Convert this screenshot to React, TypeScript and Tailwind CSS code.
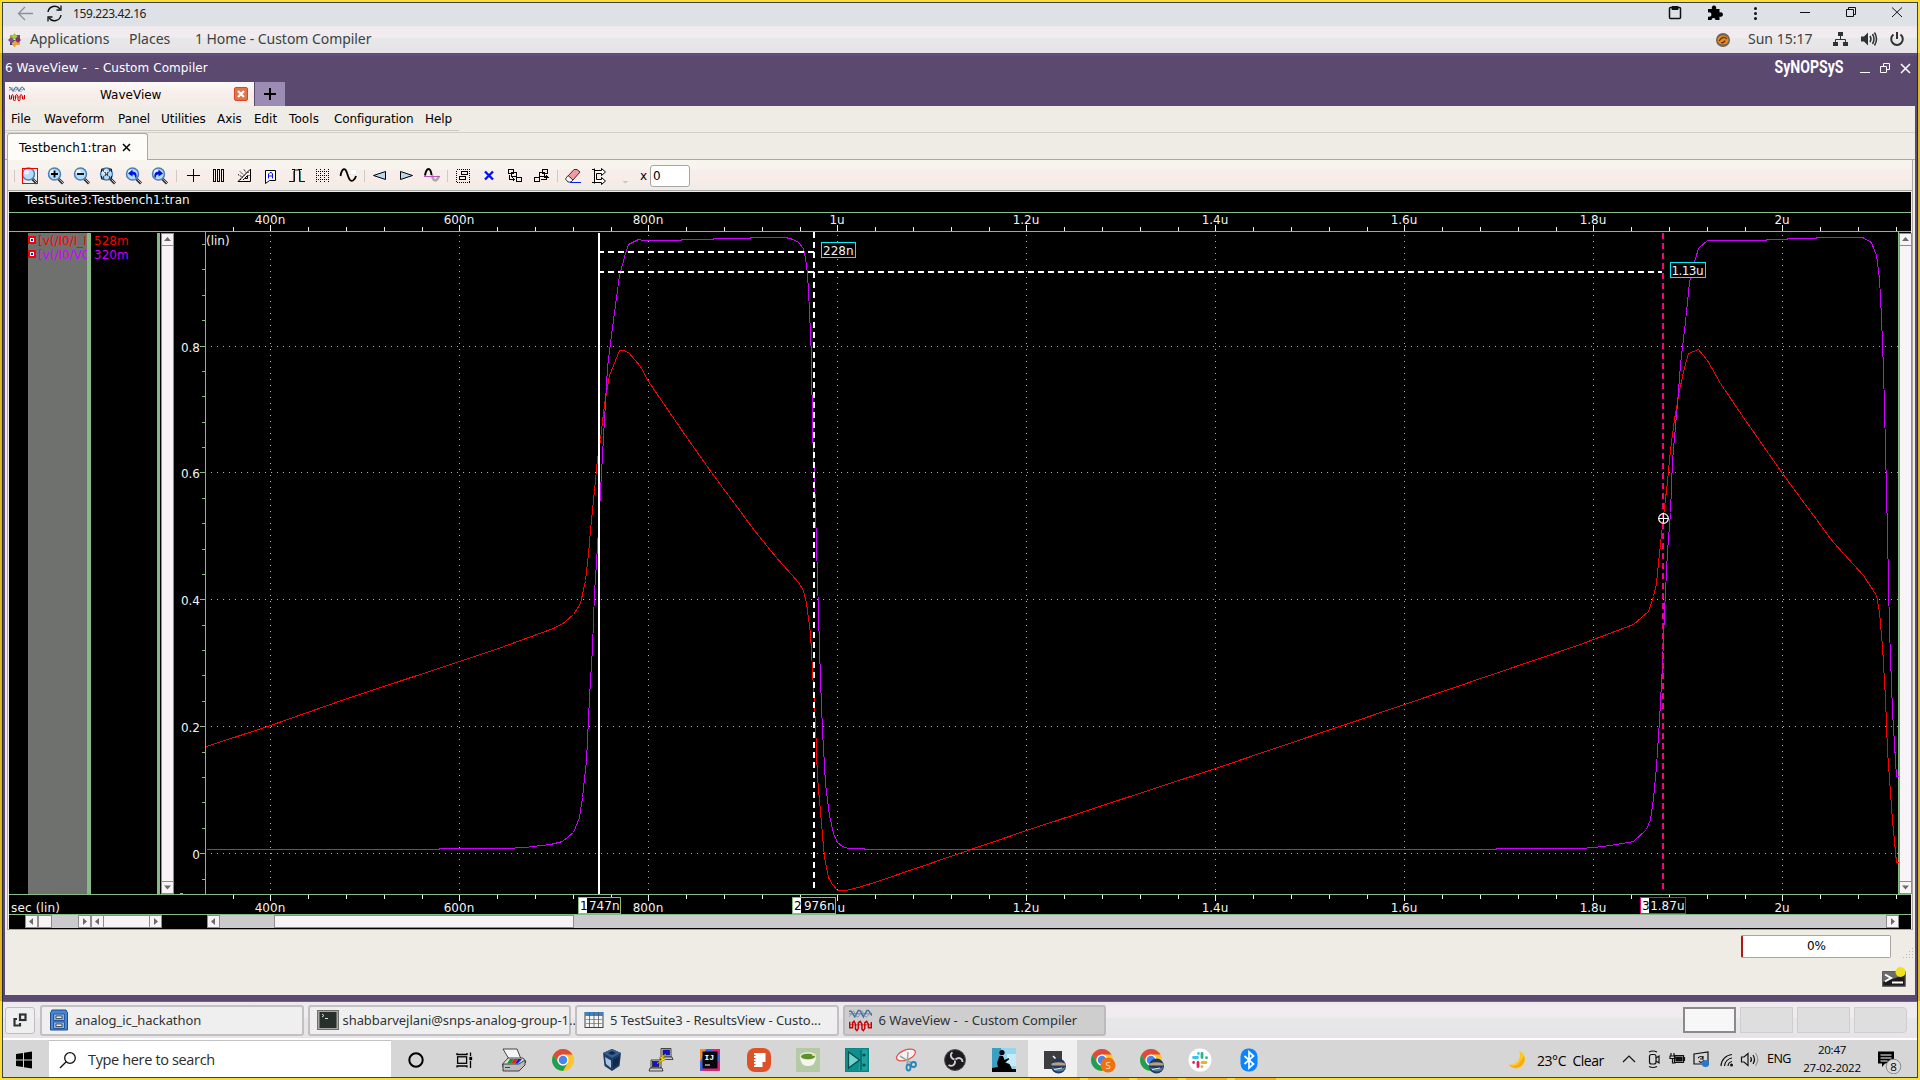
import React from "react";

const RED =
  "206,746 270,725 344,699 459,661 498,648 553,628 564,622 573,614 580,603 585,580 588,553 590,530 597,459 600,439 604,404 609,375 615,360 619,350 623,350 628,352 640,366 648,381 687,438 711,472 754,530 775,556 798,582 803,590 806,603 810,633 812,670 815,724 817,777 821,823 824,857 828,877 832,884 837,890 845,890 858,887 880,880 1026,830 1215,768 1404,704 1580,644 1593,639 1617,630 1633,624 1648,611 1653,596 1656,583 1659,553 1663,516 1667,481 1670,449 1674,419 1679,390 1684,367 1688,353 1693,351 1698,349 1707,360 1720,383 1743,417 1782,473 1807,507 1833,542 1863,575 1876,595 1879,612 1882,646 1885,698 1887,750 1892,820 1896,862 1898,862";
const PURPLE =
  "206,849 438,849 440,848 505,848 525,847 541,845 550,844 562,841 573,832 579,817 582,797 586,760 589,697 592,647 594,593 598,530 600,491 603,437 607,367 612,327 619,275 625,253 628,244 638,239 643,240 680,240 682,239 712,239 714,238 749,238 751,237 785,237 793,239 798,242 803,248 805,258 807,273 809,310 811,357 812,430 814,477 816,543 818,613 820,680 822,730 825,783 829,815 833,833 837,842 842,846 848,848 863,848 865,849 1495,849 1497,848 1580,848 1593,847 1610,845 1633,841 1646,829 1650,819 1653,798 1656,766 1659,720 1662,664 1664,612 1667,551 1670,512 1672,460 1677,403 1680,364 1685,321 1689,282 1693,265 1698,248 1707,240 1765,240 1767,239 1786,239 1788,238 1815,238 1817,237 1862,237 1871,242 1876,255 1879,278 1881,317 1883,369 1885,447 1887,534 1889,629 1892,711 1896,776 1898,776";

const MAJORS = [
  [270, "400n"], [459, "600n"], [648, "800n"], [837, "1u"], [1026, "1.2u"],
  [1215, "1.4u"], [1404, "1.6u"], [1593, "1.8u"], [1782, "2u"],
] as [number, string][];
const MINORS = Array.from({ length: 45 }, (_, i) => Math.round(232.6 + i * 37.8)).filter((v) => v < 1898);
const LEVELS = [[346, "0.8"], [472, "0.6"], [599, "0.4"], [726, "0.2"], [853, "0"]] as [number, string][];
const YMINORS = Array.from({ length: 26 }, (_, i) => Math.round(244 + i * 25.38));
const DJV = "DejaVu Sans, sans-serif";

function Ruler({ top }: { top?: boolean }) {
  const y0 = top ? 213 : 895;
  return (
    <svg width="1904" height="18" viewBox={`9 ${y0} 1904 18`} className="block shrink-0 overflow-visible" fontFamily={DJV} fontSize="12" fill="#f2f2f2">
      {MINORS.map((x) => <rect key={x} x={x} y={top ? 227 : 895} width="1" height="4" />)}
      {MAJORS.map(([x, t]) => (
        <g key={t}>
          <rect x={x} y={top ? 225 : 895} width="1" height="6" />
          {/* the second cursor's readout covers the leading digit of this label */}
          {!top && t === "1u"
            ? <text x="837.500" y="912">u</text>
            : <text x={x} y={top ? 224 : 912} textAnchor="middle">{t}</text>}
        </g>
      ))}
      {!top && (
        <g>
          <text x="11" y="912" textLength="49">sec (lin)</text>
          {[[578, 43, "1", "747n", "#86bb88"], [792, 44, "2", "976n", "#86bb88"], [1640, 46, "3", "1.87u", "#f4047c"]].map(([x, w, n, t, c]) => (
            <g key={n as string}>
              <rect x={(x as number) + 0.5} y="897.5" width={(w as number) - 1} height="16" fill="#000" stroke={c as string} />
              <rect x={(x as number) + 1} y="898" width="8" height="15" fill="#fff" />
              <text x={(x as number) + 2} y="910" fill="#000" textLength="7">{n}</text>
              <text x={(x as number) + (w as number) - 1.5} y="910" textAnchor="end">{t}</text>
            </g>
          ))}
        </g>
      )}
    </svg>
  );
}

function Plot() {
  return (
    <svg width="1724" height="662" viewBox="175 232 1724 662" className="block shrink-0" fontFamily={DJV} fontSize="12" fill="#f2f2f2">
      <g shapeRendering="crispEdges" fill="none">
        {MAJORS.map(([x]) => <path key={x} d={`M${x + 0.5} 235V894`} stroke="#b0b0b0" strokeDasharray="1 5" />)}
        {LEVELS.map(([y]) => <path key={y} d={`M205 ${y + 0.5}H1898`} stroke="#b0b0b0" strokeDasharray="1 5" />)}
        <path d="M205.5 232V894M1898.5 232V894" stroke="#86bb88" />
        {YMINORS.map((y) => <path key={y} d={`M202 ${y + 0.5}H205`} stroke="#86bb88" />)}
        {LEVELS.map(([y]) => <path key={y} d={`M200 ${y + 0.5}H205`} stroke="#86bb88" />)}
        <path d="M180 893.5h3" stroke="#86bb88" />
        <polyline points={RED} stroke="#fa0000" transform="translate(.5 .5)" />
        <polyline points={PURPLE} stroke="#cc00ff" transform="translate(.5 .5)" />
        <path d="M599 233V894" stroke="#fff" strokeWidth="2" />
        <path d="M814 232V888" stroke="#fff" strokeWidth="2" strokeDasharray="6 4" />
        <path d="M598 252H814M598 272H1662" stroke="#fff" strokeWidth="2" strokeDasharray="6 4" />
        <path d="M1663 233V890" stroke="#f4047c" strokeWidth="2" strokeDasharray="6 4" />
        <path d="M1658 518.5h11M1663.5 513v11" stroke="#fff" />
      </g>
      <circle cx="1663.5" cy="518.5" r="4.8" fill="none" stroke="#fff" strokeWidth="1.200" />
      <rect x="821.5" y="242.500" width="34" height="15" fill="#000" stroke="#00f0f8" />
      <text x="823" y="254.500">228n</text>
      <rect x="1670.5" y="262.500" width="35" height="15" fill="#000" stroke="#00f0f8" />
      <text x="1671.500" y="274.500" textLength="32">1.13u</text>
      <text x="206" y="244.500">(lin)</text>
      {LEVELS.map(([y, t]) => <text key={t} x="200" y={y + 5.5} textAnchor="end">{t}</text>)}
    </svg>
  );
}

function Arrow({ d }: { d: "u" | "d" | "l" | "r" }) {
  const p = { u: "M6.500 4l3.500 4H3z", d: "M3 4.500h7l-3.500 4z", l: "M4 6.500L8 3v7z", r: "M9 6.500L5 3v7z" }[d];
  return (
    <svg width="13" height="13" viewBox="0 0 13 13" className="block shrink-0">
      <rect x=".5" y=".5" width="12" height="12" fill="#f7f3f7" stroke="#8f8d90" />
      <path d={p} fill="#6b6b6b" />
    </svg>
  );
}

function VScroll() {
  return (
    <div className="mt-[1px] flex h-[661px] w-[13px] shrink-0 flex-col border-x border-[#8f8d90] bg-[#f7f3f7]">
      <div className="-mx-px"><Arrow d="u" /></div>
      <div className="flex-1" />
      <div className="-mx-px"><Arrow d="d" /></div>
    </div>
  );
}

function Tool({ children }: { children?: React.ReactNode }) {
  return (
    <svg width="26" height="26" viewBox="0 0 26 26" className="block shrink-0" fill="none" stroke="#000" strokeWidth="1">
      {children}
    </svg>
  );
}
function Sep({ w }: { w: string }) {
  return <div className={`${w} flex shrink-0 justify-center`}><div className="h-[12px] w-[1px] bg-[#cfc9c4]" /></div>;
}
function Zoom({ children, boxed }: { children?: React.ReactNode; boxed?: boolean }) {
  return (
    <Tool>
      <path d="M15.500 16l4.500 4.500" stroke="#333" strokeWidth="3" />
      <path d="M16.500 16.500l3.500 3.500" stroke="#bbb" strokeWidth="1" />
      <circle cx="11.500" cy="11" r="6" fill="#b3dbfb" stroke="#4a80b4" strokeWidth="1.500" />
      <circle cx="9.500" cy="9" r="2.500" fill="#e4f3ff" stroke="none" />
      {children}
      {boxed && <rect x="5.500" y="5.500" width="15" height="15" stroke="#f00000" />}
    </Tool>
  );
}

function Wave({ size }: { size: number }) {
  return (
    <svg width={size} height={size} viewBox="0 0 16 16" fill="none" className="block shrink-0">
      <path d="M0 3.300h16" stroke="#6b8199" strokeWidth=".6" />
      <path d="M0 1.500h1.500L4 5.500 6.500 1h1L10 5.500 12.500 1h1L16 4.500" stroke="#47709c" strokeWidth="1" />
      <path d="M0 5.500L2 3l1-1.800L5.500 5.500h1L9 1.200l2.500 4.300h.8L15.500 2" stroke="#6f93b8" strokeWidth=".6" />
      <path d="M0 11h16" stroke="#b33" strokeWidth=".6" />
      <path d="M.5 8.800V13h2V9.500L3.500 8.500l1 2v3.500l1 1 1-1.500V9.500l1.300-1 1.200 2v3.500l1 1 1-1.500V9.500l1.300-1 1.200 2V13h2V9" stroke="#c80000" strokeWidth="1" />
    </svg>
  );
}

function Chrome() {
  return (
    <g>
      <circle cx="12" cy="12" r="11" fill="#fbc52c" />
      <path d="M2.500 6.500A11 11 0 0 1 21.500 6.500H12A5.500 5.500 0 0 0 7 14.500z" fill="#df4a3e" />
      <path d="M2.500 6.500A11 11 0 0 0 12 23l4.800-8.300A5.500 5.500 0 0 1 7.200 14.700z" fill="#1e9e58" />
      <circle cx="12" cy="12" r="5.500" fill="#fff" />
      <circle cx="12" cy="12" r="4.300" fill="#4a84f0" />
    </g>
  );
}
function Badge() {
  return (
    <g>
      <circle cx="17.500" cy="18" r="7.500" fill="#25385e" />
      <path d="M10.500 15.500q7-2.500 14 0v2h-14z" fill="#b3a27f" />
      <path d="M10.500 19q7 3 14 0l-2 3.500q-5 2-9 0z" fill="#547ea3" />
      <path d="M13 21.500l8-1.500" stroke="#dbe8f0" />
    </g>
  );
}

const APPS: React.ReactNode[] = [
  <circle cx="12" cy="12" r="6.700" fill="none" stroke="#000" strokeWidth="2" />,
  <g fill="none" stroke="#000" strokeWidth="1.300"><path d="M4 5V6.500H14V5M4 19.500V18H14v1.500" /><rect x="4.600" y="8.800" width="9" height="6.500" /><path d="M17.500 4.500V8M17.500 13v7" /><rect x="17" y="9.500" width="1.500" height="2" fill="#000" /></g>,
  <g stroke="#333" strokeWidth=".9"><path d="M1 1h14l4 10H7z" fill="#f6f6f6" /><path d="M6 10h15l3 4-6 5H1l-.5-3z" fill="#ddd" /><path d="M1 16h16l6-4v5l-6 6H1z" fill="#bbb" /><path d="M8 11h4l-3 4.500H5z" fill="#0a9a2e" stroke="none" /><path d="M12 11h4l-3 4.500H9z" fill="#e0251f" stroke="none" /><path d="M16 11h4l-4 4.500h-3z" fill="#1627d8" stroke="none" /><path d="M3 19.500h5" /></g>,
  <Chrome />,
  <g><path d="M12 1l9 4-1.500 13L12 23l-7.500-5L3 5z" fill="#1d3c66" /><path d="M12 1l9 4-9 5-9-5z" fill="#33608f" /><path d="M5 9l6 3.500V20l-5-4z" fill="#a9c3df" /><path d="M19.500 8L13 12v8l5.500-4z" fill="#122848" /><path d="M8 5l4-2 4 2-4 2z" fill="#122848" /></g>,
  <g stroke="#222" strokeWidth=".8"><path d="M12 .5h10v8.500H12z" fill="#d5d5d5" /><rect x="14" y="2" width="6.500" height="5" fill="#0a12e0" /><path d="M12 9h11l1 2.500H11z" fill="#ccc" /><path d="M2 12h10v8H2z" fill="#d5d5d5" /><rect x="3.500" y="13.500" width="6.500" height="5" fill="#0a12e0" /><path d="M1 20h12l1 3H0z" fill="#ccc" /><path d="M17 6l-7 4 3 1-5 4.500 8.500-4-3-1.500z" fill="#ffe600" stroke="#a78f00" /></g>,
  <g><rect x="2" y="1" width="20" height="22" rx="1" fill="#d62a78" /><path d="M2 1h12L2 14z" fill="#f38b2c" /><path d="M8 1h14v11L2 23v-9z" fill="#3a65e8" /><path d="M12 1h10v6z" fill="#e0267c" /><rect x="4.500" y="3.500" width="15" height="17" fill="#08080c" /><text x="6.500" y="12" fontSize="8" fontWeight="700" fontFamily="Liberation Mono, monospace" fill="#fff">IJ</text><path d="M7 17h5" stroke="#fff" /></g>,
  <g><rect x="0" y="0" width="24" height="24" rx="8" fill="#dd5228" /><path d="M7 5h11.500v9h-3v5H7z" fill="#fff" /><path d="M5.500 7.500h3M5.500 10.500h3M5.500 13.500h3M5.500 16.500h3" stroke="#dd5228" strokeWidth="1.200" /></g>,
  <g><rect width="24" height="24" fill="#b4caa5" /><path d="M4 8h16q0 10-8 10T4 8z" fill="#f3f5ee" /><ellipse cx="12" cy="8" rx="8.500" ry="4" fill="#dfe7d0" /><ellipse cx="12" cy="8.500" rx="7" ry="2.800" fill="#5c8f2e" /><circle cx="17.500" cy="6.500" r="1.500" fill="#efe3a0" /></g>,
  <g><rect width="24" height="24" fill="#0a8583" /><rect x="1.500" y="1.500" width="21" height="21" fill="#1fa3a0" /><path d="M1.500 1.500h14l-2 21h-12z" fill="#0e8f8d" /><path d="M3.500 4l11 8-11 8z" fill="#6fd4cc" stroke="#064a4a" strokeWidth="1.200" /><path d="M16 2v20" stroke="#056664" strokeWidth="1.500" /><circle cx="19" cy="7" r="1.600" fill="#064a4a" /><circle cx="19" cy="17" r="1.600" fill="#064a4a" /></g>,
  <g fill="none"><ellipse cx="12" cy="7" rx="10" ry="5" transform="rotate(-22 12 7)" fill="#f6f2f2" stroke="#dc5252" strokeWidth="1.300" /><path d="M6 8l11 7M14 4l-1 13" stroke="#9aa" strokeWidth="1.500" /><ellipse cx="14.500" cy="19.500" rx="2" ry="3" stroke="#2188bd" strokeWidth="1.800" /><circle cx="19.500" cy="16.500" r="2.500" stroke="#2188bd" strokeWidth="1.800" /></g>,
  <g><circle cx="12" cy="12" r="10.500" fill="#1c1a1e" stroke="#555" /><g fill="none" stroke="#cfcfd3" strokeWidth="1.800"><path d="M11.500 11.500C7 10 7 6 9.500 4.500" /><path d="M12.500 11.500c3.500-3 7-1 7 2.500" /><path d="M12 12.500c.5 4.500-3 6.500-6.500 4.500" /></g></g>,
  <g><rect width="24" height="24" fill="#3b9fc4" /><path d="M9 0h15v24H12z" fill="#93d8ee" /><path d="M15 6h9v12h-9z" fill="#c3ecf8" /><circle cx="10" cy="4.500" r="2.600" /><path d="M7.500 8l3.500 0 1.500 4 4-2 .7 1.300-4 3.200 4.300 1.500L20 21h4v3H0v-4l6-1-1-4z" /></g>,
  <g><rect x="3" y="3" width="18" height="18" fill="#3c3d40" /><path d="M12 8l2.500 2.500" stroke="#fff" fill="none" strokeWidth="1.500" /><Badge /></g>,
  <g><Chrome /><circle cx="18" cy="17" r="7.500" fill="#f0720e" /><text x="18" y="20.500" fontSize="9.500" textAnchor="middle" fontFamily="Open Sans, sans-serif" fill="#ffe2c6">S</text></g>,
  <g><Chrome /><Badge /></g>,
  <g><circle cx="12" cy="12" r="11.500" fill="#fff" /><g strokeWidth="2.800" strokeLinecap="round"><path d="M5.500 9.500h4M10.500 5.500v.1" stroke="#36c5f0" /><path d="M14 5.500v4M18.500 9.700v.1" stroke="#2eb67d" /><path d="M14 14.500h4M14 18.600v.1" stroke="#ecb22e" /><path d="M10 14.500v4M5.600 14.500v.1" stroke="#e01e5a" /></g></g>,
  <g><rect x="3.500" y="0.500" width="17" height="23" rx="8" fill="#0a84ff" /><path d="M7.500 8l9 8-4.500 4V4l4.500 4-9 8" fill="none" stroke="#fff" strokeWidth="1.700" /></g>,
];

function Task({ children, icon, active, w }: { children: string; icon: React.ReactNode; active?: boolean; w: string }) {
  return (
    <div className={`${active ? "border-[#bcbabc] bg-[#cfcecf]" : "border-[#c2c0c2] bg-[#efefef]"} mr-[4px] flex h-[31px] w-[263.5px] shrink-0 items-center rounded-[3px] border-2 pl-[7px]`}>
      <div className={`${w} flex shrink-0`}>{icon}</div>
      <span className="whitespace-pre pt-[1px] font-['Noto_Sans'] text-[13px] tracking-[-0.06px] text-[#2e3436]">{children}</span>
    </div>
  );
}

export default function App() {
  const gnome = "bg-[linear-gradient(#ebe9eb_0%,#f1ebef_15%,#f1ecef_42%,#e7e7e7_46%,#e7e7e7_70%,#e8e3e7_90%)]";
  return (
    <div className="flex h-[1080px] w-[1920px] flex-col overflow-hidden bg-[#fadd35] pt-[2px] font-['DejaVu_Sans',sans-serif] text-[12px] text-black">
      <div className="flex h-[51px] shrink-0 flex-col border-x-2 border-[#fadd35]">
        <div className="flex h-full flex-col border-x border-t border-[#3c4248]">
          <div className="flex h-[23px] shrink-0 items-center bg-[#dee1e6]">
            <svg width="66" height="23" viewBox="3 3 66 23" fill="none" className="shrink-0">
              <path d="M33 13.500H19M25 7l-6.500 6.500L25 20" stroke="#8d9094" strokeWidth="1.300" />
              <path d="M48 12a6.700 6.700 0 0 1 12-3M61 15a6.700 6.700 0 0 1-12 3" stroke="#111" strokeWidth="1.400" />
              <path d="M61 5.500V10h-4.500M48 21.500V17h4.500" stroke="#111" strokeWidth="1.300" />
            </svg>
            <span className="ml-[4px] pb-[2px] font-['Noto_Sans'] text-[12px] tracking-[-0.4px] text-[#222]">159.223.42.16</span>
            <div className="flex-1" />
            <svg width="254" height="23" viewBox="1663 3 254 23" fill="none" stroke="#111" className="shrink-0">
              <rect x="1669.500" y="7.500" width="11" height="11" rx="1" strokeWidth="1.500" /><path d="M1672 6.500h6v3h-6z" fill="#111" />
              <path d="M1708 9h4a2.300 2.300 0 1 1 4 0h3.500v3.500a2.300 2.300 0 1 1 0 4V20h-4a2 2 0 1 0-4 0h-3.500v-3.500a2.300 2.300 0 1 0 0-4z" fill="#000" stroke="none" />
              <g fill="#111" stroke="none"><circle cx="1755.500" cy="8.500" r="1.500" /><circle cx="1755.500" cy="13.500" r="1.500" /><circle cx="1755.500" cy="18.500" r="1.500" /></g>
              <path d="M1800 12.500h10" />
              <path d="M1846.500 9.500h7v7h-7zM1848.500 9.500v-2h7v7h-2" />
              <path d="M1892 7.500l10 9.500M1902 7.500l-10 9.500" />
            </svg>
          </div>
          <div className={`flex min-h-0 flex-1 items-center font-['Noto_Sans'] text-[14px] text-[#3b4345] ${gnome}`}>
            <svg width="27" height="16" viewBox="1 0 27 16" className="shrink-0">
              <g><rect x="8" y="3" width="5" height="4" fill="#96b43a" /><rect x="13" y="3" width="5" height="4" fill="#8c3a8c" /><rect x="8" y="8" width="5" height="5" fill="#2d4482" /><rect x="13" y="8" width="5" height="5" fill="#eba333" /><path d="M12.500 1l3 3.500-3 3-3-3z" fill="#a5cc45" /><path d="M12.500 8.500l3 3-3 4-3-4z" fill="#eba63c" /><path d="M6 8l3-3 3 3-3 3z" fill="#8a4a9c" /><path d="M19 8l-3-3-3 3 3 3z" fill="#8a2b70" /></g>
            </svg>
            <span className="w-[99px] pb-[2px] tracking-[-0.1px]">Applications</span>
            <span className="w-[66px] pb-[2px]">Places</span>
            <span className="pb-[2px] tracking-[-0.05px]">1 Home - Custom Compiler</span>
            <div className="flex-1" />
            <svg width="16" height="16" viewBox="0 0 16 16"><circle cx="8" cy="8" r="7" fill="#6e6558" /><ellipse cx="8" cy="8" rx="5.500" ry="4.500" fill="#e78a25" /><path d="M4 9q4-6 8-2M6 10.500q3 1 4-2" stroke="#6b3200" fill="none" strokeWidth="1.300" /></svg>
            <span className="ml-[17px] w-[83px] pb-[2px]">Sun 15:17</span>
            <svg width="86" height="24" viewBox="1831 28 86 24" fill="#2e3436" stroke="#2e3436" className="shrink-0">
              <path d="M1838 32h5v4h-5zM1833 42h5v4h-5zM1843 42h5v4h-5z" stroke="none" /><path d="M1840.500 36v3.500M1835.500 42v-2.500h10V42" fill="none" />
              <path d="M1861 36.500h3l4-4v13l-4-4h-3z" stroke="none" /><path d="M1870 36q2 3 0 6M1872.500 34q3 5 0 10M1874.500 32.500q4 6.500 0 13" fill="none" strokeWidth="1.500" />
              <path d="M1893.500 34.500a5.800 5.800 0 1 0 7 0M1897 32v7" fill="none" strokeWidth="2" />
            </svg>
          </div>
        </div>
      </div>

      <div className="h-[948px] shrink-0 border-x-2 border-[#d9b822]">
        <div className="flex h-full flex-col border-x border-[#2c2340] bg-[#5b4970]">
          <div className="h-[1px] shrink-0 bg-[#55525f]" />
          <div className="flex h-[28px] shrink-0 items-center bg-[linear-gradient(#66578a_0px,#5b4970_2px)] pl-[2px] text-white">
            <span className="whitespace-pre pb-[1px] text-[12px] tracking-[0.07px]">6 WaveView -  - Custom Compiler</span>
            <div className="flex-1" />
            <svg width="144" height="26" viewBox="1773 55 144 26" fill="none" stroke="#fff" className="shrink-0">
              <g transform="translate(1774.500 72.500) scale(1 1.120)">
                <text fontFamily="Roboto, sans-serif" fontWeight="700" fontSize="16" fill="#fff" stroke="none" textLength="69" lengthAdjust="spacingAndGlyphs">SyNOPSyS</text>
              </g>
              <path d="M1860 72.500h10" />
              <path d="M1880.500 66.500h6v6h-6zM1883.500 66.500v-3h6v6h-3" />
              <path d="M1901 64l9 9M1910 64l-9 9" strokeWidth="1.500" />
            </svg>
          </div>

          <div className="flex h-[913px] shrink-0 flex-col px-[2px]">
            <div className="flex h-[24px] shrink-0">
              <div className="flex w-[249px] items-center bg-[linear-gradient(#fbf9f5,#f8efed_45%,#f6ece6_75%,#f1eee9)] pl-[4px]">
                <Wave size={16} />
                <span className="ml-[75px] flex-1 pt-[1px]">WaveView</span>
                <div className="mr-[6px] flex h-[14px] w-[14px] items-center justify-center rounded-[2px] border border-[#d9452a] bg-[#e27447]">
                  <svg width="8" height="8" viewBox="0 0 8 8"><path d="M1 1l6 6M7 1L1 7" stroke="#fff" strokeWidth="2.200" /></svg>
                </div>
              </div>
              <div className="ml-[1px] flex w-[30px] items-center justify-center bg-[#9c8cb4]">
                <svg width="12" height="12" viewBox="0 0 12 12"><path d="M6 0v12M0 6h12" stroke="#000" strokeWidth="2" /></svg>
              </div>
            </div>

            <div className="flex min-h-0 flex-1 flex-col bg-[#efece6]">
              <div className="flex h-[25px] w-[454px] shrink-0 items-center border-b border-[#cdcac6] pl-[6px] pt-[2px] text-[12px] tracking-[-0.05px]">
                <span className="w-[33px]">File</span><span className="w-[74px]">Waveform</span><span className="w-[43px]">Panel</span><span className="w-[56px]">Utilities</span><span className="w-[37px]">Axis</span><span className="w-[35px]">Edit</span><span className="w-[45px] tracking-[0.1px]">Tools</span><span className="w-[91px] tracking-[-0.15px]">Configuration</span><span>Help</span>
              </div>
              <div className="mt-[1px] h-[1px] shrink-0 bg-[#d3d0cc]" />
              <div className="flex h-[27px] shrink-0">
                <div className="w-[2px] border-b border-[#aaa7a4]" />
                <div className="flex w-[141px] items-center rounded-t-[3px] border-x border-t border-[#aaa7a4] bg-[#fefcf8] pl-[11px]">
                  <span className="pt-[2px] tracking-[0.05px]">Testbench1:tran</span>
                  <svg width="9" height="9" viewBox="0 0 9 9" className="ml-[6px]"><path d="M1 1l7 7M8 1L1 8" stroke="#000" strokeWidth="1.500" /></svg>
                </div>
                <div className="flex-1 border-b border-[#aaa7a4]" />
              </div>

              <div className="mx-[2px] flex h-[770px] shrink-0 flex-col border-x border-[#aaa7a4]">
                <div className="flex h-[31px] shrink-0 items-center border-b border-[#aaa7a4] bg-[linear-gradient(#f8f5ef_0px,#f7f4ee_9px,#f7edee_10px,#f7ede9_17px,#f7ece6_23px,#f0ece8_26px,#efece6_31px)] pl-[6px] pt-[2px]">
                  <div className="flex w-[3px]"><div className="h-[12px] w-[1px] bg-[#cfc9c4]" /></div>
                  <Zoom boxed />
                  <Zoom><path d="M8 11h7M11.500 7.500v7" strokeWidth="1.800" /></Zoom>
                  <Zoom><path d="M8 11h7" strokeWidth="1.800" /></Zoom>
                  <Zoom><path d="M7.500 7l8 8M15.500 7l-8 8" stroke="#222" strokeWidth="1.100" strokeDasharray="2 1" /><path d="M6.500 9V6h3M13.500 6h3v3M16.500 13v3h-3M9.500 16h-3v-3" stroke="#222" /></Zoom>
                  <Zoom><path d="M15.500 14.500q1-6-4-6v-2L7 10.500l4.500 3v-2q3 0 2.500 3z" fill="#0010e8" stroke="none" /></Zoom>
                  <Zoom><path d="M7.500 14.500q-1-6 4-6v-2l4.500 4-4.500 3v-2q-3 0-2.500 3z" fill="#0010e8" stroke="none" /></Zoom>
                  <Sep w="w-[7px]" />
                  <Tool><path d="M6.500 12.500h13M13 6v13" shapeRendering="crispEdges" /></Tool>
                  <Tool><path d="M7.500 6.500h2v12h-2zM11.500 6.500h2v12h-2zM15.500 6.500h2v12h-2z" shapeRendering="crispEdges" /></Tool>
                  <Tool><path d="M18.500 6v12.500H6L18 6.500M15.500 12.500v3h-3z" /><path d="M6 11.500l5 3M8 8.500l4 4M12 6.500l2 3" strokeDasharray="1.500 1" /><path d="M8 16.500h1M11 16.500h1M16 9v1M17 12v1" /></Tool>
                  <Tool><path d="M7.500 7.500h10v10h-6l-4 3z" fill="#fff" /><path d="M10.500 15.500V11l1.500-1.500h1.500l1 1.500v4.500M10.500 13h4" stroke="#0014f0" /></Tool>
                  <Tool><path d="M5 18.500h5.500V7h5v11.500H21" stroke="#111" /><path d="M9.500 8v10M16.500 8v10" stroke="#3b8a8e" /><path d="M8 6.500h3M14 6.500h4" /></Tool>
                  <Tool><path d="M6.500 6v14M10.500 6v14M14.500 6v14M18.500 6v14M6 8.500h14M6 12.500h14M6 16.500h14" strokeDasharray="1 1" shapeRendering="crispEdges" /></Tool>
                  <Tool><rect x="14.500" y="6.500" width="6" height="5" fill="#fff" stroke="#eee" /><path d="M4.500 13C6 4 9.500 5 11 10s3 9 6 7.500c2-1 2.500-2.500 3-4.500" strokeWidth="1.800" /></Tool>
                  <Sep w="w-[5px]" />
                  <Tool><path d="M6.500 12.500l12-4v8z" fill="#b4d7f2" /></Tool>
                  <Tool><path d="M19.500 12.500l-12-4v8z" fill="#b4d7f2" /></Tool>
                  <Tool><path d="M13 12c1 6 4 8 7 1" stroke="#aaa" strokeWidth="2.500" /><path d="M6 12.500C7.500 4 11.500 4 12.500 12" strokeWidth="2" /><path d="M5 13.500h16" stroke="#bd55bd" /></Tool>
                  <Sep w="w-[5px]" />
                  <Tool><rect x="6.500" y="6.500" width="13" height="13" strokeDasharray="1 1" shapeRendering="crispEdges" /><path d="M11.500 8.500h6v3h-6zM9.500 13.500h6v3h-6z" shapeRendering="crispEdges" /></Tool>
                  <Tool><path d="M9 8.500l8 8M17 8.500l-8 8" stroke="#0010f0" strokeWidth="2.400" /></Tool>
                  <Tool><path d="M6.500 6.500h5v4h-5zM9.500 9.500h5v4h-5zM14.500 14.500h5v4h-5zM7.500 12v4.500h5M10.500 14.500l2 2-2 2" shapeRendering="crispEdges" /></Tool>
                  <Tool><path d="M14.500 6.500h5v4h-5zM11.500 9.500h5v4h-5zM6.500 14.500h5v4h-5zM13 16.500h5.500V14M16.500 15l2-2 2 2" shapeRendering="crispEdges" /></Tool>
                  <Sep w="w-[6px]" />
                  <Tool><path d="M14 6.500h3L20 9l-7 8-5-4z" fill="#f09aa4" stroke="#4a2a2a" /><path d="M8 12.500l5 4.500-2 2H8l-2.500-3z" fill="#fff" stroke="#333" /><path d="M10 19.500h11" stroke="#0020f0" /></Tool>
                  <Tool><path d="M8.500 5.500v15M6 6.500h2.500M6 19.500h2.500M8.500 7.500h7v-2l4 3.500-4 3.500v-2h-5v6h5v-2l4 3.500-4 3.500v-2h-7z" fill="#fff" /></Tool>
                  <Tool><path d="M10.500 18h6l-3 2.500z" fill="#c9c5c2" stroke="none" /></Tool>
                  <span className="ml-[2px] w-[10px]">x</span>
                  <div className="flex h-[22px] w-[40px] items-center rounded-[3px] border border-[#a9a5a2] bg-white pl-[2px]">0</div>
                </div>

                <div className="mx-[1px] mt-[1px] flex h-[737px] shrink-0 flex-col bg-black text-[#f2f2f2]">
                  <div className="flex h-[21px] shrink-0 items-center border-b border-[#86bb88] pb-[4px] pl-[16px] tracking-[0.08px]">TestSuite3:Testbench1:tran</div>
                  <div className="flex h-[19px] shrink-0 border-b border-[#86bb88]"><Ruler top /></div>
                  <div className="flex h-[662px] shrink-0">
                    <div className="ml-[19px] mt-[1px] flex w-[63px] shrink-0 flex-col overflow-hidden border-r-4 border-[#86bb88] bg-[#6f716e]">
                      {[["[v(/I0/I_I", "text-[#fa0000]"], ["[v(/I0/VO", "text-[#cc00ff]"]].map(([t, c]) => (
                        <div key={t} className={`${c} flex h-[14px] items-center whitespace-nowrap`}>
                          <div className="flex h-[8px] w-[8px] shrink-0 items-center justify-center border-2 border-[#f80000] bg-white"><div className="h-[2px] w-[2px] bg-[#0028d0]" /></div>
                          <span className="ml-[2px] pt-[1px]">{t}</span>
                        </div>
                      ))}
                    </div>
                    <div className="mt-[1px] flex w-[69px] shrink-0 flex-col border-r-[3px] border-[#86bb88] pl-[3px] pt-[1px]">
                      <div className="flex h-[14px] items-center text-[#fa0000]">528m</div>
                      <div className="flex h-[14px] items-center text-[#cc00ff]">320m</div>
                    </div>
                    <div className="ml-[1px] flex w-[14px] shrink-0"><VScroll /></div>
                    <Plot />
                    <VScroll />
                  </div>
                  <div className="flex h-[21px] shrink-0 border-y border-[#86bb88]"><Ruler /></div>
                  <div className="flex h-[13px] shrink-0">
                    <div className="ml-[16px] flex w-[53px] shrink-0 bg-[#cdcacd]"><Arrow d="l" /><div className="w-[14px] border border-[#8f8d90] bg-[#f7f3f7]" /></div>
                    <Arrow d="r" /><Arrow d="l" />
                    <div className="w-[45px] shrink-0 border-y border-[#8f8d90] bg-[#f7f3f7]" />
                    <Arrow d="r" />
                    <div className="ml-[45px] flex w-[1679px] shrink-0 bg-[#cdcacd]">
                      <Arrow d="l" />
                      <div className="ml-[54px] w-[300px] border border-[#8f8d90] bg-[#f7f3f7]" />
                    </div>
                    <Arrow d="r" />
                  </div>
                </div>
                <div className="h-[1px] bg-[#aaa7a4]" />
              </div>

              <div className="flex h-[32px] shrink-0 items-center pl-[1736px]">
                <div className="flex h-[23px] w-[150px] items-center justify-center rounded-[2px] border border-l-2 border-[#a9a5a2] border-l-[#b01818] bg-white">0%</div>
                <svg width="12" height="12" viewBox="0 0 12 12" className="ml-[11px] mt-[16px]" fill="#bbb7b3"><path d="M10 0h1v1h-1zM7 3h1v1H7zM10 3h1v1h-1zM4 6h1v1H4zM7 6h1v1H7zM10 6h1v1h-1zM1 9h1v1H1zM4 9h1v1H4zM7 9h1v1H7zM10 9h1v1h-1z" /></svg>
              </div>
              <div className="flex pl-[1877px] pt-[4px]">
                <svg width="26" height="22" viewBox="0 0 26 22">
                  <rect x=".7" y="5.700" width="22.500" height="14.500" fill="#1b1b1b" stroke="#555" strokeWidth="1.200" />
                  <path d="M1 6h22v3L1 16z" fill="#6a6a6a" />
                  <path d="M3 8.500l6 3.500-6 3.500M10 16.500h11" stroke="#fff" strokeWidth="2" fill="none" />
                  <circle cx="18.500" cy="6" r="5" fill="#f0e21a" />
                </svg>
              </div>
            </div>
          </div>
        </div>
      </div>

      <div className="flex min-h-0 flex-1 flex-col border-x-2 border-[#fadd35]">
        <div className="flex min-h-0 flex-1 flex-col border-x border-[#3c4248]">
          <div className={`flex h-[37px] shrink-0 items-center border-t border-[#6d6876] pl-[2px] ${gnome}`}>
            <div className="mr-[5px] flex h-[27px] w-[30px] shrink-0 items-center justify-center rounded-[3px] border border-[#bfbdbf] bg-[#efefef]">
              <svg width="14" height="14" viewBox="0 0 14 14" fill="none" stroke="#2e3436" strokeWidth="2.200"><rect x="7" y="1.500" width="5.500" height="5.500" /><path d="M4 6H1.500v6.500H7V10" /></svg>
            </div>
            <Task w="w-[26px]" icon={<svg width="20" height="22" viewBox="0 0 20 22"><path d="M3 1h14l1.500 3v17h-17V4z" fill="#4a86d4" stroke="#1f4b8c" /><path d="M4.500 5h11v6.500h-11zM4.500 13h11v6.500h-11z" fill="#84b2ea" stroke="#2458a0" /><path d="M7 7h6v2.500H7zM7 15h6v2.500H7z" fill="#eee" stroke="#333" strokeWidth=".8" /></svg>}>analog_ic_hackathon</Task>
            <Task w="w-[26px]" icon={<svg width="22" height="20" viewBox="0 0 22 20"><rect x=".5" y=".5" width="21" height="19" fill="#a9aaa6" stroke="#6d6d6a" /><rect x="2.500" y="2" width="17" height="16" fill="#28302c" /><path d="M5 4l2 1.500L5 7M8 8.500h3" stroke="#ddd" fill="none" /></svg>}>shabbarvejlani@snps-analog-group-1...</Task>
            <Task w="w-[26px]" icon={<svg width="20" height="16" viewBox="0 0 20 16"><rect x="1" y="0" width="18" height="15.500" fill="#f4f4f4" stroke="#444" /><rect x="1" y="0" width="18" height="4" fill="#3c82c4" /><path d="M1 7.500h18M1 11.500h18" stroke="#999" /><path d="M5.500 0v15.500M10 0v15.500M14.500 0v15.500" stroke="#555" strokeWidth=".8" /></svg>}>5 TestSuite3 - ResultsView - Custo...</Task>
            <Task active w="w-[27px]" icon={<div className="-ml-[3px]"><Wave size={23} /></div>}>6 WaveView -  - Custom Compiler</Task>
            <div className="ml-[573px] flex gap-[4px]">
              <div className="h-[26px] w-[53px] border-2 border-[#8b898b] bg-[#f7f7f7]" />
              <div className="h-[26px] w-[53px] border border-[#cfcdcf] bg-[#dededf]" />
              <div className="h-[26px] w-[53px] border border-[#cfcdcf] bg-[#dededf]" />
              <div className="h-[26px] w-[53px] rounded-r-[4px] border border-[#cfcdcf] bg-[#dededf]" />
            </div>
          </div>
          <div className="h-[2px] shrink-0 bg-white" />
          <div className="flex h-[37px] shrink-0 items-center bg-[#d5d6d5] font-['Open_Sans']">
            <div className="flex w-[46px] shrink-0 pl-[12px] pt-[2px]">
              <svg width="18" height="18" viewBox="0 0 18 18"><path d="M1 3l7-1v6.500H1zM9 1.800L17 .5v8H9zM1 9.500h7V16l-7-1zM9 9.500h8v8L9 16.300z" /></svg>
            </div>
            <div className="flex h-full w-[342px] shrink-0 items-center border-t border-[#c2c2c2] bg-white">
              <svg width="39" height="26" viewBox="0 -1 39 26" fill="none" stroke="#111" strokeWidth="1.300"><circle cx="21" cy="11" r="5.300" /><path d="M17.200 14.800L11 21" /></svg>
              <span className="pt-[1px] text-[14.5px] tracking-[-0.35px] text-[#2c2c2c]">Type here to search</span>
            </div>
            {APPS.map((a, i) => (
              <div key={i} className={`${i === 13 ? "bg-[#f0f0f0]" : ""} flex h-full w-[49px] shrink-0 items-center justify-center pt-[2px]`}>
                <svg width="24" height="24" viewBox="0 0 24 24" className="overflow-visible">{a}</svg>
              </div>
            ))}
            <div className="ml-[234px] flex items-center pt-[2px]">
              <svg width="20" height="20" viewBox="0 0 20 20"><path d="M12 1a9 9 0 1 1-10.500 13.500A9.500 9.500 0 0 0 12 1z" fill="#fdc916" /><path d="M17 6a9 9 0 0 1-15.500 8.500Q10 20 17 6z" fill="#f6a91b" /></svg>
              <span className="ml-[10px] whitespace-pre pt-[1px] text-[14px] tracking-[-0.45px]">23°C  Clear</span>
            </div>
            <div className="flex-1" />
            <svg width="142" height="28" viewBox="1621 1046 142 28" fill="none" stroke="#111" strokeWidth="1.200" className="shrink-0">
              <path d="M1623 1063l6-6 6 6" />
              <rect x="1649.500" y="1055.500" width="6.500" height="9.500" rx="2" /><path d="M1656 1059l3-2v7l-3-2M1649 1053q4-2 8 0M1649 1067.500q4 2 8 0" />
              <path d="M1674.500 1056.500h9v7h-9z" /><path d="M1676 1058h6v4h-6z" fill="#111" /><path d="M1671 1054v3M1674 1054v3M1670 1057h5v2.500h-5zM1672.500 1060v4h3M1684.500 1058v4" />
              <path d="M1694 1055l14-2v12h-14z" /><path d="M1698 1059q3-3 5 0M1703 1057v3h-3M1704 1061q-3 4-5 1" /><circle cx="1705.500" cy="1064.500" r="3.600" fill="#2878c8" stroke="none" />
              <path d="M1721 1067a12 12 0 0 1 11-11.500M1724.500 1067a9 9 0 0 1 7.500-8M1728 1067a5 5 0 0 1 4-4.500" /><circle cx="1731.500" cy="1066" r="1.500" fill="#111" stroke="none" />
              <path d="M1741.500 1058h2.500l4-3.500v12l-4-3.500h-2.500z" /><path d="M1750.500 1058q2 2.500 0 5M1753 1056q3 4.500 0 9" /><path d="M1755.500 1054q4.500 6.500 0 13" stroke="#999" />
            </svg>
            <span className="ml-[4px] w-[31px] pt-[2px] text-[12.5px] tracking-[-0.5px]">ENG</span>
            <div className="flex w-[68px] flex-col items-center pt-[1px] text-[11.5px] leading-[18px] tracking-[-0.25px]"><span>20:47</span><span>27-02-2022</span></div>
            <svg width="51" height="30" viewBox="1867 1044.500 51 30" className="shrink-0">
              <path d="M1879 1052h16v12h-9l-3 3.500V1064h-4z" /><path d="M1881.500 1055.500h11M1881.500 1058.500h11M1881.500 1061.500h7" stroke="#fff" strokeWidth="1.100" />
              <circle cx="1894.500" cy="1067" r="7.300" fill="#dadada" stroke="#888" /><text x="1894.500" y="1071.200" fontSize="11.500" textAnchor="middle">8</text>
            </svg>
          </div>
          <div className="h-[1px] shrink-0 bg-[#3c4248]" />
        </div>
        <div className="flex h-[2px] shrink-0 gap-[8px] pl-[1028px]">
          <div className="w-[50px] bg-[#efb70f]" /><div className="w-[41px] bg-[#efb70f]" /><div className="w-[41px] bg-[#efb70f]" /><div className="w-[41px] bg-[#efb70f]" /><div className="w-[41px] bg-[#efb70f]" />
        </div>
      </div>
    </div>
  );
}
